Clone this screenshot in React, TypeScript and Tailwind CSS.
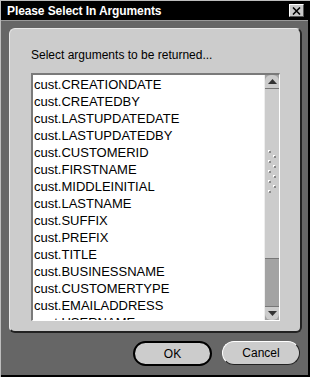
const ITEMS = [
  'cust.CREATIONDATE',
  'cust.CREATEDBY',
  'cust.LASTUPDATEDATE',
  'cust.LASTUPDATEDBY',
  'cust.CUSTOMERID',
  'cust.FIRSTNAME',
  'cust.MIDDLEINITIAL',
  'cust.LASTNAME',
  'cust.SUFFIX',
  'cust.PREFIX',
  'cust.TITLE',
  'cust.BUSINESSNAME',
  'cust.CUSTOMERTYPE',
  'cust.EMAILADDRESS',
  'cust.USERNAME',
]

function Grip() {
  // little embossed dots in the middle of the thumb
  const dots = [0, 1, 2, 3, 4, 5, 6, 7, 8]
  return (
    <svg width="12" height="48" viewBox="0 0 12 48">
      {dots.map((i) => (
        <g key={i}>
          <rect x={i % 2 === 0 ? 2 : 7} y={i * 5} width="2" height="2" fill="#ffffff" />
          <rect x={i % 2 === 0 ? 3 : 8} y={i * 5 + 1} width="2" height="2" fill="#8a8a8a" />
        </g>
      ))}
    </svg>
  )
}

function Arrow({ up }: { up?: boolean }) {
  return (
    <svg width="9" height="5" viewBox="0 0 9 5">
      {up ? <polygon points="4.5,0 9,5 0,5" fill="#333" /> : <polygon points="0,0 9,0 4.5,5" fill="#333" />}
    </svg>
  )
}

export default function App() {
  return (
    <div
      className="w-[310px] h-[377px] bg-[#666666] border-l border-t border-[#bdbdbd] flex flex-col overflow-hidden"
      style={{ fontFamily: '"Liberation Sans", Arial, sans-serif' }}
    >
      <div className="w-[309px] h-[376px] border-r-2 border-b-2 border-black flex flex-col">
        {/* Title bar */}
        <div className="h-[19px] bg-black flex items-center justify-between pl-[6px] pr-[4px]">
          <span className="text-white text-[12px] font-bold leading-none tracking-[-0.1px]">Please Select In Arguments</span>
          <button className="w-[15px] h-[13px] bg-[#c8c8c8] border-t border-l border-white border-r border-b border-r-[#555] border-b-[#555] flex items-center justify-center">
            <svg width="9" height="8" viewBox="0 0 9 8">
              <path d="M1 0.5 L8 7.5 M8 0.5 L1 7.5" stroke="#000" strokeWidth="1.6" />
            </svg>
          </button>
        </div>
        <div className="h-px bg-[#9a9a9a]" />

        {/* Body */}
        <div className="flex-1 flex flex-col pl-[8px] pr-[6px] pt-[7px]">
          {/* Inner panel */}
          <div className="h-[305px] bg-[#cccccc] rounded-[6px] border-t border-l border-[#e8e8e8] border-r-2 border-b-2 border-r-[#222] border-b-[#222] pl-[21px] pr-[20px] pt-[20px]">
            <div className="text-[12px] text-black leading-none h-[24px]">Select arguments to be returned...</div>
            <div className="h-[248px] flex border-t-2 border-l-2 border-[#7a7a7a] border-r border-b border-r-white border-b-white bg-white">
              <div className="flex-1 overflow-hidden pl-[1px] pt-[1px]">
                {ITEMS.map((item) => (
                  <div key={item} className="h-[17px] text-[13px] leading-[17px] text-black whitespace-nowrap">
                    {item}
                  </div>
                ))}
              </div>
              {/* Scrollbar */}
              <div className="w-[15px] flex flex-col bg-[#a3a3a3] border-l border-[#eeeeee]">
                <div className="h-[14px] bg-[#cccccc] rounded-t-[6px] border-b border-[#777] flex items-center justify-center">
                  <Arrow up />
                </div>
                <div className="h-[170px] bg-[#cccccc] border-b border-[#777] flex items-center justify-center">
                  <Grip />
                </div>
                <div className="flex-1" />
                <div className="h-[14px] bg-[#cccccc] rounded-b-[6px] border-t border-[#777] flex items-center justify-center">
                  <Arrow />
                </div>
              </div>
            </div>
          </div>

          {/* Buttons */}
          <div className="flex justify-end gap-[10px] pr-[2px] pt-[8px]">
            <button className="w-[79px] h-[25px] rounded-full bg-[#cccccc] border-2 border-black text-[12px] text-black">
              OK
            </button>
            <button className="w-[78px] h-[24px] rounded-full bg-[#cccccc] border border-t-white border-l-white border-r-[#222] border-b-[#222] text-[12px] text-black">
              Cancel
            </button>
          </div>
        </div>
      </div>
    </div>
  )
}
